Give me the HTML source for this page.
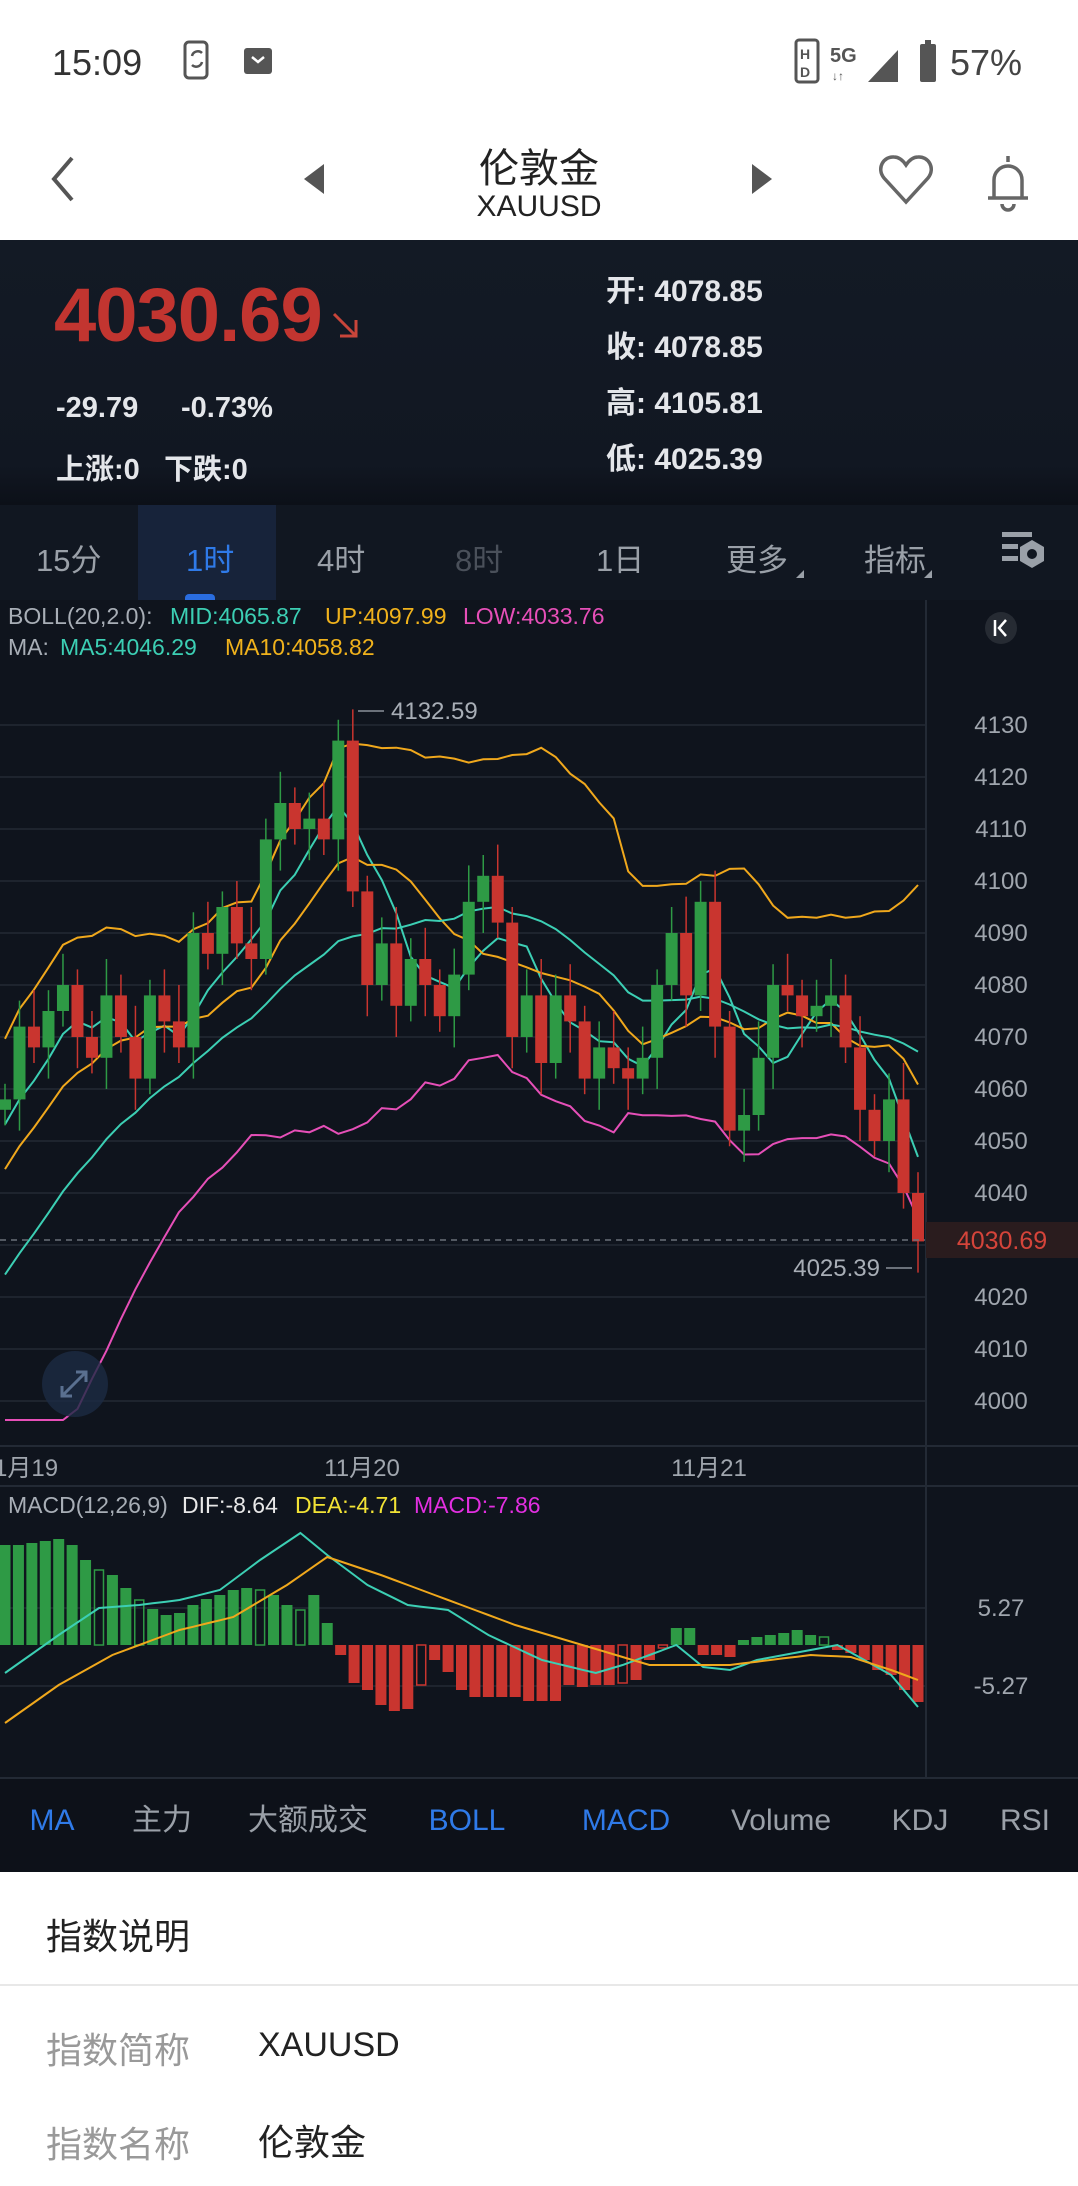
<!DOCTYPE html>
<html><head><meta charset="utf-8">
<style>
*{margin:0;padding:0;box-sizing:border-box}
body{width:1078px;height:2186px;background:#fff;font-family:"Liberation Sans","Noto Sans CJK SC",sans-serif;position:relative;overflow:hidden}
.a{position:absolute;white-space:nowrap}
</style></head><body>
<div class="a" style="left:52px;top:42px;font-size:36px;color:#333">15:09</div>
<svg class="a" style="left:182px;top:40px" width="36" height="42" viewBox="0 0 36 42"><rect x="3" y="2" width="22" height="36" rx="4" fill="none" stroke="#555" stroke-width="3"/><path d="M10 16a6 6 0 0 1 10-3M20 22a6 6 0 0 1-10 3" stroke="#555" stroke-width="2.5" fill="none"/></svg>
<svg class="a" style="left:244px;top:48px" width="28" height="26"><rect x="0" y="0" width="28" height="26" rx="3" fill="#555"/><path d="M8 9l6 5 6-5" stroke="#fff" stroke-width="2.5" fill="none"/></svg>
<svg class="a" style="left:794px;top:38px" width="170" height="46"><rect x="2" y="2" width="22" height="42" rx="3" fill="none" stroke="#555" stroke-width="3"/><text x="6" y="21" font-size="14" font-weight="bold" fill="#555" font-family="Liberation Sans">H</text><text x="6" y="39" font-size="14" font-weight="bold" fill="#555" font-family="Liberation Sans">D</text><text x="36" y="24" font-size="20" font-weight="bold" fill="#555" font-family="Liberation Sans">5G</text><text x="38" y="42" font-size="12" fill="#555">↓↑</text><polygon points="74,44 104,44 104,12" fill="#555"/><rect x="126" y="6" width="16" height="38" rx="2" fill="#555"/><rect x="131" y="2" width="6" height="5" fill="#555"/></svg>
<div class="a" style="left:950px;top:42px;font-size:36px;color:#444">57%</div>
<svg class="a" style="left:48px;top:154px" width="30" height="50"><path d="M24 4L6 25l18 21" stroke="#555" stroke-width="4" fill="none"/></svg>
<svg class="a" style="left:302px;top:162px" width="24" height="34"><polygon points="22,2 22,32 2,17" fill="#555"/></svg>
<svg class="a" style="left:750px;top:162px" width="24" height="34"><polygon points="2,2 2,32 22,17" fill="#555"/></svg>
<div class="a" style="left:0;width:1078px;text-align:center;top:136px;font-size:40px;color:#222">伦敦金</div>
<div class="a" style="left:0;width:1078px;text-align:center;top:190px;font-size:30px;color:#222">XAUUSD</div>
<svg class="a" style="left:878px;top:154px" width="56" height="52"><path d="M28 48L6 24C-2 14 6 2 16 3c6 0 10 5 12 8 2-3 6-8 12-8 10-1 18 11 10 21z" stroke="#666" stroke-width="3.5" fill="none"/></svg>
<svg class="a" style="left:984px;top:154px" width="48" height="60"><path d="M24 2v6M10 44V26a14 14 0 0 1 28 0v18M4 44h40M18 50a6 6 0 0 0 12 0" stroke="#666" stroke-width="3.5" fill="none"/></svg>
<div class="a" style="left:0;top:240px;width:1078px;height:265px;background:linear-gradient(#131a25,#111722 85%,#0c1018)"></div>
<div class="a" style="left:54px;top:272px;font-size:76px;font-weight:bold;color:#c23530;letter-spacing:-1px">4030.69</div>
<svg class="a" style="left:330px;top:310px" width="30" height="30"><path d="M4 4l22 22M10 26h16V10" stroke="#c8453a" stroke-width="3" fill="none"/></svg>
<div class="a" style="left:56px;top:392px;font-size:29px;font-weight:bold;color:#e4e6ea">-29.79</div>
<div class="a" style="left:181px;top:392px;font-size:29px;font-weight:bold;color:#e4e6ea">-0.73%</div>
<div class="a" style="left:56px;top:446px;font-size:29px;font-weight:bold;color:#e4e6ea">上涨:0&nbsp;&nbsp; 下跌:0</div>
<div class="a" style="left:606px;top:264px;font-size:30px;font-weight:bold;color:#e4e6ea;line-height:56px">开: 4078.85<br>收: 4078.85<br>高: 4105.81<br>低: 4025.39</div>
<div class="a" style="left:0;top:505px;width:1078px;height:95px;background:#111721"></div>
<div class="a" style="left:138px;top:505px;width:138px;height:95px;background:#17233a"></div>
<div class="a" style="left:185px;top:594px;width:30px;height:8px;background:#2a6de0;border-radius:4px 4px 0 0"></div>
<div class="a" style="top:535px;left:0;width:1078px;font-size:31px;color:#9aa0a8">
<span class="a" style="left:36px">15分</span><span class="a" style="left:186px;color:#2f7ae8">1时</span><span class="a" style="left:317px">4时</span><span class="a" style="left:455px;color:#4a505a">8时</span><span class="a" style="left:596px">1日</span><span class="a" style="left:726px">更多</span><span class="a" style="left:864px">指标</span></div>
<svg class="a" style="left:796px;top:568px" width="140" height="12"><polygon points="0,10 8,10 8,2" fill="#9aa0a8"/><polygon points="138,10 130,10 138,2" fill="#9aa0a8" transform="translate(-2,0)"/></svg>
<svg class="a" style="left:1000px;top:530px" width="46" height="46"><rect x="2" y="2" width="30" height="5" fill="#9aa0a8"/><rect x="2" y="14" width="16" height="5" fill="#9aa0a8"/><rect x="2" y="26" width="16" height="5" fill="#9aa0a8"/><polygon points="32,10 44,17 44,31 32,38 20,31 20,17" fill="#9aa0a8"/><circle cx="32" cy="24" r="5" fill="#111721"/></svg>
<svg class="a" id="ch" style="left:0;top:600px" width="1078" height="1272" viewBox="0 600 1078 1272"></svg>
<div class="a" style="left:46px;top:1908px;font-size:36px;color:#222">指数说明</div>
<div class="a" style="left:0;top:1984px;width:1078px;height:2px;background:#e8e8e8"></div>
<div class="a" style="left:46px;top:2022px;font-size:36px;color:#999">指数简称</div>
<div class="a" style="left:258px;top:2026px;font-size:34px;color:#222">XAUUSD</div>
<div class="a" style="left:46px;top:2116px;font-size:36px;color:#999">指数名称</div>
<div class="a" style="left:258px;top:2114px;font-size:36px;color:#222">伦敦金</div>
<script>
(function(){
var S=document.getElementById('ch'),h='';
function R(x,y,w,hh,c){h+='<rect x="'+x+'" y="'+y+'" width="'+w+'" height="'+hh+'" fill="'+c+'"/>';}
function T(x,y,s,c,sz,an){h+='<text x="'+x+'" y="'+y+'" fill="'+c+'" font-size="'+(sz||22)+'" font-family="Liberation Sans,Noto Sans CJK SC,sans-serif"'+(an?' text-anchor="'+an+'"':'')+'>'+s+'</text>';}
R(0,600,1078,1272,'#0f141d');
R(0,1778,1078,94,'#0d1119');
for(var i=0;i<=13;i++){var y=725+i*52;h+='<line x1="0" y1="'+y+'" x2="925" y2="'+y+'" stroke="#232a35" stroke-width="1.5"/>';T(1001,y+8,4130-i*10,'#a0a6ae',24,'middle');}
h+='<line x1="0" y1="1608" x2="925" y2="1608" stroke="#232a35" stroke-width="1.5"/><line x1="0" y1="1686" x2="925" y2="1686" stroke="#232a35" stroke-width="1.5"/>';
h+='<line x1="926" y1="600" x2="926" y2="1778" stroke="#232a35" stroke-width="2"/>';
h+='<line x1="0" y1="1446" x2="1078" y2="1446" stroke="#232a35" stroke-width="2"/><line x1="0" y1="1486" x2="1078" y2="1486" stroke="#232a35" stroke-width="2"/><line x1="0" y1="1778" x2="1078" y2="1778" stroke="#232a35" stroke-width="2"/>';
T(1001,1616,'5.27','#a0a6ae',24,'middle');T(1001,1694,'-5.27','#a0a6ae',24,'middle');
var pre=[3985,3990,3992,3995,3998,4000,4005,4008,4012,4018,4022,4028,4032,4036,4040,4044,4048,4050,4054,4056];
var C=[4058,4072,4068,4075,4080,4070,4066,4078,4070,4062,4078,4073,4068,4090,4086,4095,4088,4085,4108,4115,4110,4112,4108,4127,4098,4080,4088,4076,4085,4080,4074,4082,4096,4101,4092,4070,4078,4065,4078,4073,4062,4068,4064,4062,4066,4080,4090,4078,4096,4072,4052,4055,4066,4080,4078,4074,4076,4078,4068,4056,4050,4058,4040,4030.69];
var A=pre.concat(C),n=C.length,off=pre.length,sp=(918-5)/(n-1);
function Y(p){return 725+(4130-p)*5.2}function X(i){return 5+i*sp}
function ma(k,j){var s=0,c=0;for(var m=j;m>j-k&&m>=0;m--){s+=A[m];c++;}return s/c}
function line(f,col){var d='';for(var i=0;i<n;i++){d+=(i?'L':'M')+X(i).toFixed(1)+' '+f(i+off).toFixed(1);}h+='<path d="'+d+'" stroke="'+col+'" stroke-width="2" fill="none"/>';}
line(function(j){return Y(ma(5,j))},'#3ccfb4');
line(function(j){return Y(ma(10,j))},'#f0a81c');
var mid=function(j){return ma(20,j)},sd=function(j){var m=mid(j),s=0;for(var k=j-19;k<=j;k++)s+=(A[k]-m)*(A[k]-m);return Math.sqrt(s/20)};
line(function(j){return Y(mid(j))},'#3ccfb4');
line(function(j){return Y(mid(j)+2*sd(j))},'#f0a81c');
line(function(j){return Math.min(1420,Y(mid(j)-2*sd(j)))},'#e64fb8');
for(var i=0;i<n;i++){var o=A[i+off-1],c=C[i],hi=Math.max(o,c)+3+(i*7%5),lo=Math.min(o,c)-3-(i*3%6),col=c>=o?'#2e9a45':'#c9352f',x=X(i);
h+='<line x1="'+x+'" y1="'+Y(hi)+'" x2="'+x+'" y2="'+Y(lo)+'" stroke="'+col+'" stroke-width="1.5"/>';
var t=Y(Math.max(o,c)),b=Y(Math.min(o,c));R(x-6,t,12,Math.max(2,b-t),col);}
h+='<line x1="0" y1="1240" x2="925" y2="1240" stroke="#6a707a" stroke-width="1.5" stroke-dasharray="6,5"/>';
R(926,1222,152,36,'#2a1c1e');T(1002,1249,'4030.69','#d5443a',25,'middle');
h+='<line x1="358" y1="711" x2="384" y2="711" stroke="#8a9099" stroke-width="1.5"/>';T(391,719,'4132.59','#a8aeb6',24);
h+='<line x1="886" y1="1268" x2="912" y2="1268" stroke="#8a9099" stroke-width="1.5"/>';T(880,1276,'4025.39','#a8aeb6',24,'end');
h+='<circle cx="75" cy="1384" r="33" fill="#1c2b44" opacity=".8"/><path d="M62 1396l24-24M76 1372h10v10M72 1396H62v-10" stroke="#5a7090" stroke-width="3" fill="none"/>';
h+='<circle cx="1001" cy="628" r="16" fill="#262b33"/><path d="M995 620v16M1006 620l-7 8 7 8" stroke="#fff" stroke-width="2.5" fill="none"/>';
T(8,624,'BOLL(20,2.0): ','#a8aeb6',23);T(170,624,'MID:4065.87','#3ccfb4',23);T(325,624,'UP:4097.99','#f0b21c',23);T(463,624,'LOW:4033.76','#e64fb8',23);
T(8,655,'MA: ','#a8aeb6',23);T(60,655,'MA5:4046.29','#3ccfb4',23);T(225,655,'MA10:4058.82','#f0b21c',23);
T(-6,1476,'1月19','#a0a6ae',24);T(362,1476,'11月20','#a0a6ae',24,'middle');T(709,1476,'11月21','#a0a6ae',24,'middle');
T(8,1513,'MACD(12,26,9) ','#a8aeb6',23);T(182,1513,'DIF:-8.64','#e8e8e8',23);T(295,1513,'DEA:-4.71','#f2e335',23);T(414,1513,'MACD:-7.86','#e22fe0',23);
var z=1645;
var H=[100,100,102,104,106,100,85,75,70,57,45,36,30,32,40,46,50,55,57,55,50,40,35,50,22,-10,-38,-45,-60,-66,-64,-40,-15,-27,-45,-52,-52,-52,-52,-56,-56,-56,-40,-42,-40,-40,-38,-35,-15,-3,17,17,-10,-10,-12,5,8,10,12,15,10,8,-5,-8,-15,-25,-30,-45,-57];
var hn=H.length,hs=(918-5)/(hn-1);
function interp(k,i){for(var q=0;q<k.length-1;q++){if(i<=k[q+1][0]){var t=(i-k[q][0])/(k[q+1][0]-k[q][0]);return k[q][1]+t*(k[q+1][1]-k[q][1]);}}return k[k.length-1][1];}
var DK=[[0,-28],[4,10],[7,37],[10,40],[13,45],[16,55],[19,85],[22,112],[24,90],[27,60],[30,40],[33,35],[36,10],[40,-15],[44,-28],[46,-20],[48,-10],[50,0],[52,-22],[54,-25],[56,-15],[60,-5],[62,0],[64,-15],[66,-30],[68,-62]];
var EK=[[0,-78],[4,-40],[8,-10],[13,15],[17,28],[21,60],[24,88],[28,70],[33,45],[38,20],[43,0],[48,-20],[54,-20],[60,-10],[63,-12],[66,-25],[68,-35]];
var prev=0;
for(var i=0;i<hn;i++){var v=H[i],col=v>=0?'#2e9a45':'#c9352f',x=5+i*hs,hol=(v>=0?v<prev:v>prev)&&(i%3==1);prev=v;
var tp=v>=0?z-v:z,hh=Math.max(2,Math.abs(v));
if(hol)h+='<rect x="'+(x-4.5)+'" y="'+tp+'" width="9" height="'+hh+'" fill="none" stroke="'+col+'" stroke-width="1.5"/>';else R(x-5.5,tp,11,hh,col);}
var d1='',d2='';for(var i=0;i<hn;i++){var x=(5+i*hs).toFixed(1);d1+=(i?'L':'M')+x+' '+(z-interp(DK,i)).toFixed(1);d2+=(i?'L':'M')+x+' '+(z-interp(EK,i)).toFixed(1);}
h+='<path d="'+d1+'" stroke="#3ccfb4" stroke-width="2" fill="none"/><path d="'+d2+'" stroke="#f0a81c" stroke-width="2" fill="none"/>';
var tb=[['MA',52,'#2f7ae8'],['主力',162,'#9aa0a8'],['大额成交',308,'#9aa0a8'],['BOLL',467,'#2f7ae8'],['MACD',626,'#2f7ae8'],['Volume',781,'#9aa0a8'],['KDJ',920,'#9aa0a8'],['RSI',1025,'#9aa0a8']];
tb.forEach(function(t){T(t[1],1830,t[0],t[2],30,'middle')});
S.innerHTML=h;
})();
</script>
</body></html>
